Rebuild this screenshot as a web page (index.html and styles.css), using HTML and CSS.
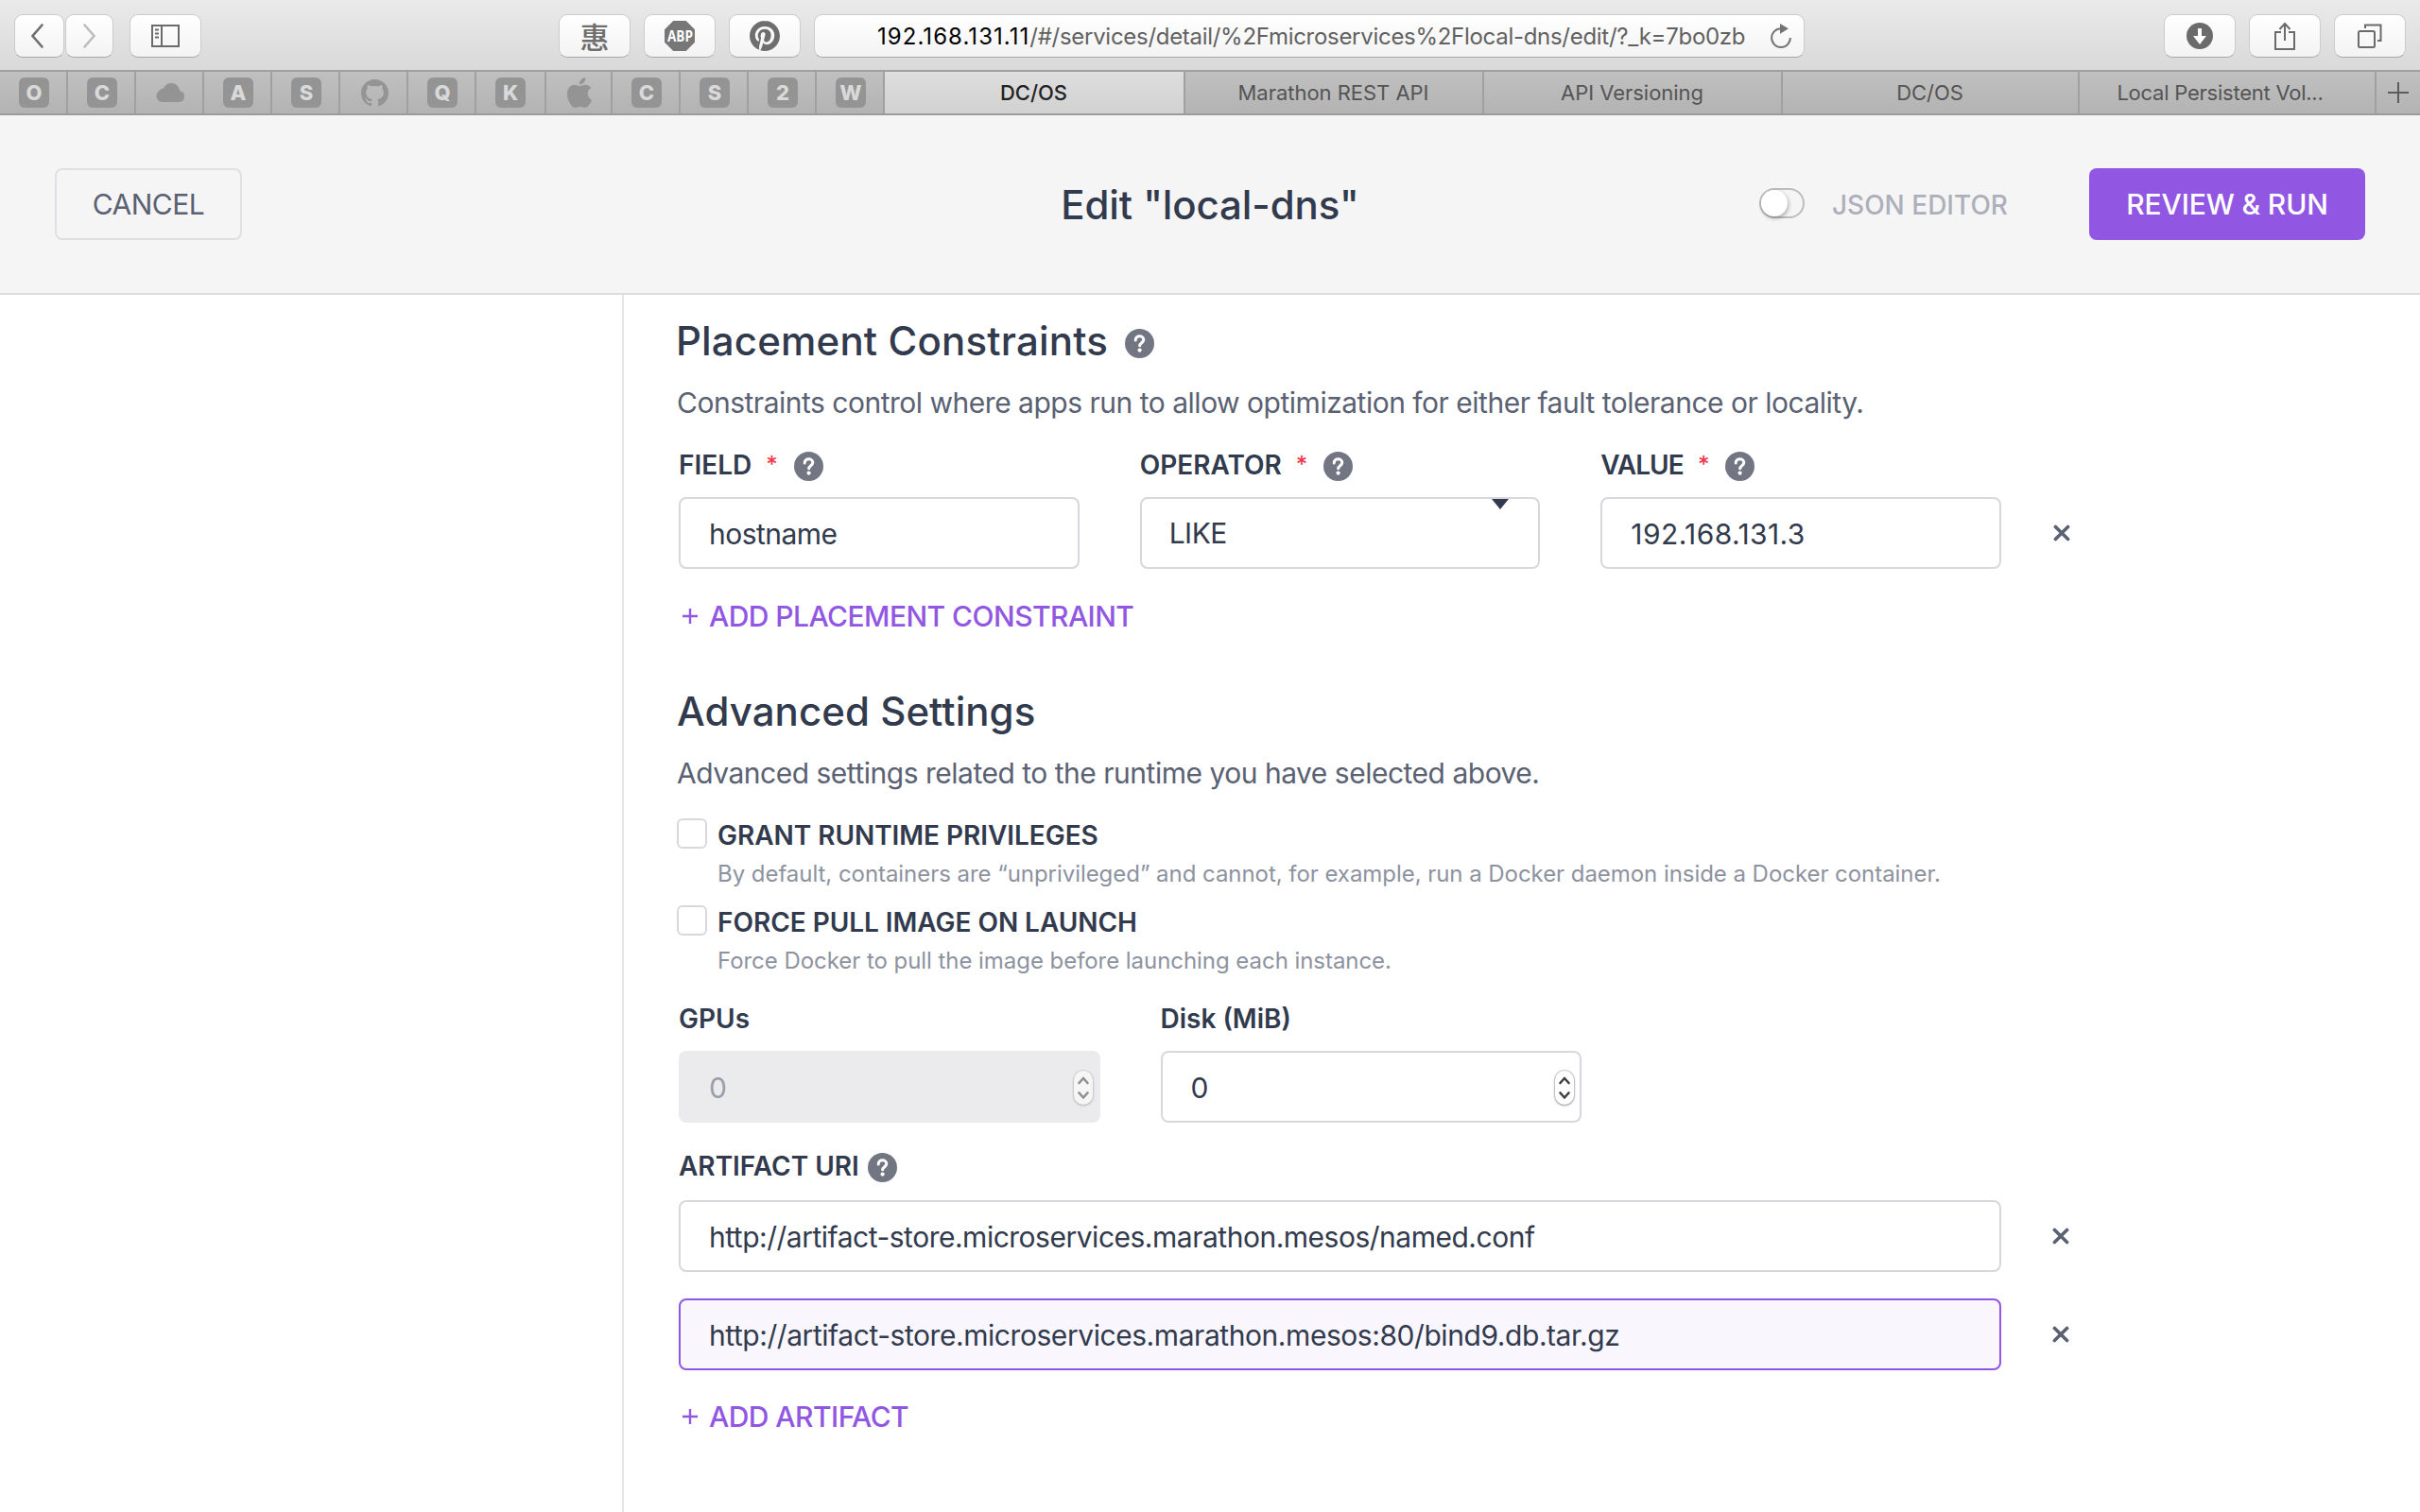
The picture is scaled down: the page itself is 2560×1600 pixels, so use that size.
FILE: index.html
```
<!DOCTYPE html>
<html lang="en">
<head>
<meta charset="utf-8">
<title>DC/OS</title>
<link rel="stylesheet" href="styles.css">
</head>
<body>
<svg class="symbols" width="0" height="0" aria-hidden="true">
  <symbol id="help" viewBox="0 0 31 31">
    <circle cx="15.5" cy="15.5" r="15.5" fill="#717682"/>
    <path d="M11.2 11.9c0-2.6 1.9-4.1 4.3-4.1s4.3 1.5 4.3 3.8c0 3-4.1 3.2-4.1 6.2" fill="none" stroke="#fff" stroke-width="3" stroke-linecap="round" stroke-linejoin="round"/>
    <circle cx="15.6" cy="22.6" r="2.1" fill="#fff"/>
  </symbol>
  <symbol id="remove" viewBox="0 0 18 18">
    <path d="M2.4 2.4l13.2 13.2M15.6 2.4L2.4 15.6" fill="none" stroke="#5a6172" stroke-width="3.6" stroke-linecap="round"/>
  </symbol>
  <symbol id="plus" viewBox="0 0 16 16">
    <path d="M8 0v16M0 8h16" stroke="#9157e2" stroke-width="2.4"/>
  </symbol>
  <symbol id="updown" viewBox="0 0 20 36">
    <path d="M5.5 13l4.5-5 4.5 5M5.5 23.5l4.5 5 4.5-5" fill="none" stroke="currentColor" stroke-width="2.6" stroke-linecap="round" stroke-linejoin="round"/>
  </symbol>
</svg>

<div class="toolbar">
  <div class="group nav">
    <span class="tool back"><svg width="18" height="28" viewBox="0 0 18 28"><path d="M14.5 2.5L4.5 14l10 11.5" fill="none" stroke="#6e6e6e" stroke-width="2.6" stroke-linecap="round"/></svg></span>
    <span class="tool forward"><svg width="18" height="28" viewBox="0 0 18 28"><path d="M3.5 2.5L13.5 14l-10 11.5" fill="none" stroke="#bdbdbd" stroke-width="2.6" stroke-linecap="round"/></svg></span>
  </div>
  <span class="tool sidebar-toggle"><svg width="30" height="24" viewBox="0 0 30 24"><path d="M1 1h28v22H1zM11 1v22" fill="none" stroke="#6b6b6b" stroke-width="2"/><path d="M4 5.5h4M4 9.5h4M4 13.5h4" stroke="#6b6b6b" stroke-width="1.8"/></svg></span>
  <div class="group extensions">
    <span class="tool seal">惠</span>
    <span class="tool"><span class="abp"><span class="abp-text">ABP</span></span></span>
    <span class="tool"><svg width="32" height="32" viewBox="0 0 24 24"><path fill="#6e6e6e" d="M12.017 0C5.396 0 .029 5.367.029 11.987c0 5.079 3.158 9.417 7.618 11.162-.105-.949-.199-2.403.041-3.439.219-.937 1.406-5.957 1.406-5.957s-.359-.72-.359-1.781c0-1.663.967-2.911 2.168-2.911 1.024 0 1.518.769 1.518 1.688 0 1.029-.653 2.567-.992 3.992-.285 1.193.6 2.165 1.775 2.165 2.128 0 3.768-2.245 3.768-5.487 0-2.861-2.063-4.869-5.008-4.869-3.41 0-5.409 2.562-5.409 5.199 0 1.033.394 2.143.889 2.741.099.12.112.225.085.345-.09.375-.293 1.199-.334 1.363-.053.225-.172.271-.401.165-1.495-.69-2.433-2.878-2.433-4.646 0-3.776 2.748-7.252 7.92-7.252 4.158 0 7.392 2.967 7.392 6.923 0 4.135-2.607 7.462-6.233 7.462-1.214 0-2.354-.629-2.758-1.379l-.749 2.848c-.269 1.045-1.004 2.352-1.498 3.146 1.123.345 2.306.535 3.55.535 6.607 0 11.985-5.365 11.985-11.987C23.97 5.39 18.592.026 11.985.026L12.017 0z"/></svg></span>
  </div>
  <div class="address">
    <span class="url"><span class="host">192.168.131.11</span><span class="path">/#/services/detail/%2Fmicroservices%2Flocal-dns/edit/?_k=7bo0zb</span></span>
    <svg width="24" height="28" viewBox="0 0 24 28"><path d="M12 6.2a9.9 9.9 0 1 0 9.900 9.900" fill="none" stroke="#737373" stroke-width="2"/><path d="M11 1l9 5.3-9 5.4z" fill="#737373"/></svg>
  </div>
  <div class="group actions">
    <span class="tool"><svg width="28" height="28" viewBox="0 0 28 28"><circle cx="14" cy="14" r="14" fill="#6b6b6b"/><path d="M12 6h4v8h5l-7 9-7-9h5z" fill="#fff"/></svg></span>
    <span class="tool"><svg width="24" height="32" viewBox="0 0 24 32"><path d="M8 12H2v18h20V12h-6M12 21V3M6.500 9L12 3l5.500 6" fill="none" stroke="#6b6b6b" stroke-width="2"/></svg></span>
    <span class="tool"><svg width="26" height="26" viewBox="0 0 26 26"><rect x="1" y="8" width="17" height="17" rx="1.5" fill="none" stroke="#6b6b6b" stroke-width="2"/><path d="M8 5V1.500h16.500V18H21" fill="none" stroke="#6b6b6b" stroke-width="2"/></svg></span>
  </div>
</div>

<div class="tabs">
  <span class="pin"><b>O</b></span>
  <span class="pin"><b>C</b></span>
  <span class="pin"><svg width="31" height="20" viewBox="0 0 31 20"><path d="M7 20a6.500 6.500 0 0 1-3.500-12Q5 5.500 8 5.500C9.500 2 12.500 0 16 0c5 0 8.500 3.500 9.300 8.200A6 6 0 0 1 25 20z" fill="#949494"/></svg></span>
  <span class="pin"><b>A</b></span>
  <span class="pin"><b>S</b></span>
  <span class="pin"><svg width="29" height="29" viewBox="0 0 16 16"><path fill="#949494" d="M8 0C3.580 0 0 3.580 0 8c0 3.540 2.290 6.530 5.470 7.590.4.070.550-.170.550-.380 0-.190-.010-.820-.010-1.490-2.010.370-2.530-.490-2.690-.940-.090-.230-.480-.940-.820-1.130-.280-.150-.680-.520-.010-.530.630-.010 1.080.580 1.230.820.720 1.210 1.870.870 2.330.660.070-.520.280-.870.510-1.070-1.780-.200-3.640-.890-3.640-3.950 0-.870.310-1.590.820-2.150-.080-.200-.360-1.020.080-2.120 0 0 .670-.210 2.200.820.640-.180 1.320-.270 2-.270.680 0 1.360.090 2 .270 1.530-1.040 2.200-.820 2.200-.820.440 1.100.160 1.920.080 2.120.510.560.820 1.270.820 2.150 0 3.070-1.870 3.750-3.650 3.950.290.250.540.730.540 1.480 0 1.070-.010 1.930-.010 2.200 0 .210.150.460.550.380A8.010 8.010 0 0 0 16 8c0-4.420-3.580-8-8-8z"/></svg></span>
  <span class="pin"><b>Q</b></span>
  <span class="pin pin-wide"><b>K</b></span>
  <span class="pin pin-narrow"><svg width="32" height="32" viewBox="0 0 24 24"><path fill="#949494" d="M12.152 6.896c-.948 0-2.415-1.078-3.960-1.040-2.040.027-3.910 1.183-4.961 3.014-2.117 3.675-.546 9.103 1.519 12.090 1.013 1.454 2.208 3.090 3.792 3.039 1.520-.065 2.090-.987 3.935-.987 1.831 0 2.350.987 3.960.948 1.637-.026 2.676-1.480 3.676-2.948 1.156-1.688 1.636-3.325 1.662-3.415-.039-.013-3.182-1.221-3.220-4.857-.026-3.040 2.480-4.494 2.597-4.559-1.429-2.090-3.623-2.324-4.390-2.376-2-.156-3.675 1.090-4.610 1.090zM15.530 3.830c.843-1.012 1.400-2.427 1.245-3.830-1.207.052-2.662.805-3.532 1.818-.780.896-1.454 2.338-1.273 3.714 1.338.104 2.715-.688 3.559-1.701"/></svg></span>
  <span class="pin"><b>C</b></span>
  <span class="pin"><b>S</b></span>
  <span class="pin"><b>2</b></span>
  <span class="pin"><b>W</b></span>
  <span class="tab tab-a active">DC/OS</span>
  <span class="tab tab-b">Marathon REST API</span>
  <span class="tab tab-b">API Versioning</span>
  <span class="tab tab-c">DC/OS</span>
  <span class="tab tab-c tight">Local Persistent Vol...</span>
  <span class="new-tab"><svg width="22" height="22" viewBox="0 0 22 22"><path d="M11 0v22M0 11h22" stroke="#5c5c5c" stroke-width="2"/></svg></span>
</div>

<header class="header">
  <div class="header-side"><button class="btn btn-cancel">CANCEL</button></div>
  <h1 class="title">Edit "local-dns"</h1>
  <div class="header-side header-end">
    <span class="switch"></span>
    <span class="switch-label">JSON EDITOR</span>
    <button class="btn btn-primary">REVIEW &amp; RUN</button>
  </div>
</header>

<div class="body">
  <aside class="side"></aside>
  <main class="main">
    <h2 class="h2">Placement Constraints <svg class="help help-lg"><use href="#help"/></svg></h2>
    <p class="lead">Constraints control where apps run to allow optimization for either fault tolerance or locality.</p>
    <div class="row constraint">
      <div class="field">
        <div class="label"><span>FIELD</span><i>*</i><svg class="help"><use href="#help"/></svg></div>
        <div class="input">hostname</div>
      </div>
      <div class="field">
        <div class="label"><span>OPERATOR</span><i>*</i><svg class="help"><use href="#help"/></svg></div>
        <div class="input select">LIKE<svg class="caret" width="18" height="11" viewBox="0 0 18 11"><path d="M0 0h18L9 11z" fill="#323a4d"/></svg></div>
      </div>
      <div class="field">
        <div class="label"><span class="value-label">VALUE</span><i>*</i><svg class="help"><use href="#help"/></svg></div>
        <div class="input ip">192.168.131.3</div>
      </div>
      <svg class="remove"><use href="#remove"/></svg>
    </div>
    <div class="add"><svg width="16" height="16"><use href="#plus"/></svg>ADD PLACEMENT CONSTRAINT</div>

    <h2 class="h2 h2-next">Advanced Settings</h2>
    <p class="lead">Advanced settings related to the runtime you have selected above.</p>
    <div class="check">
      <span class="box"></span>
      <div>
        <div class="check-label">GRANT RUNTIME PRIVILEGES</div>
        <div class="desc">By default, containers are “unprivileged” and cannot, for example, run a Docker daemon inside a Docker container.</div>
      </div>
    </div>
    <div class="check">
      <span class="box"></span>
      <div>
        <div class="check-label">FORCE PULL IMAGE ON LAUNCH</div>
        <div class="desc">Force Docker to pull the image before launching each instance.</div>
      </div>
    </div>
    <div class="row resources">
      <div class="field">
        <div class="label">GPUs</div>
        <div class="input number disabled">0<svg class="stepper"><use href="#updown"/></svg></div>
      </div>
      <div class="field">
        <div class="label">Disk (MiB)</div>
        <div class="input number">0<svg class="stepper"><use href="#updown"/></svg></div>
      </div>
    </div>
    <div class="artifacts">
      <div class="label">ARTIFACT URI<svg class="help help-near"><use href="#help"/></svg></div>
      <div class="row uri">
        <div class="input">http://artifact-store.microservices.marathon.mesos/named.conf</div>
        <svg class="remove"><use href="#remove"/></svg>
      </div>
      <div class="row uri">
        <div class="input focused">http://artifact-store.microservices.marathon.mesos:80/bind9.db.tar.gz</div>
        <svg class="remove"><use href="#remove"/></svg>
      </div>
    </div>
    <div class="add add-artifact"><svg width="16" height="16"><use href="#plus"/></svg>ADD ARTIFACT</div>
  </main>
</div>
</body>
</html>
```
FILE: styles.css
```
* { box-sizing: border-box; }
body {
  margin: 0;
  height: 1600px;
  display: flex;
  flex-direction: column;
  overflow: hidden;
  background: #fff;
  font-family: Inter, "Noto Sans", sans-serif;
  color: #323a4d;
}
svg { flex: none; display: block; }
.symbols { position: absolute; }
h1, h2, p { margin: 0; font-weight: 500; }

/* Browser toolbar */
.toolbar {
  flex: none;
  height: 76px;
  padding: 15px 15px 0 15px;
  display: flex;
  align-items: flex-start;
  background: linear-gradient(#eaeaea, #d9d9d9);
  border-bottom: 2px solid #a0a0a0;
}
.group { display: flex; gap: 14px; }
.nav { gap: 1px; }
.tool {
  width: 76px;
  height: 46px;
  display: flex;
  align-items: center;
  justify-content: center;
  background: linear-gradient(#fff, #f3f3f3);
  border: 1px solid #cbcbcb;
  border-bottom-color: #a6a6a6;
  border-radius: 9px;
}
.back { width: 53px; }
.forward { width: 51px; }
.back svg { margin-right: 6px; }
.sidebar-toggle { margin-left: 17px; }
.extensions { margin-left: 378px; }
.seal {
  font: 500 31px/44px "Noto Sans CJK SC", sans-serif;
  color: #6e6e6e;
}
.abp {
  width: 32px;
  height: 32px;
  display: flex;
  justify-content: center;
  clip-path: polygon(29% 0, 71% 0, 100% 29%, 100% 71%, 71% 100%, 29% 100%, 0 71%, 0 29%);
  background: #777;
  color: #fff;
  font: 700 16.5px/32px "Open Sans", sans-serif;
}
.abp-text { transform: scaleX(0.82); }
.address {
  width: 1048px;
  height: 46px;
  margin-left: 14px;
  padding: 0 12px 0 66px;
  display: flex;
  align-items: center;
  justify-content: space-between;
  background: linear-gradient(#fff, #f3f3f3);
  border: 1px solid #cbcbcb;
  border-bottom-color: #a6a6a6;
  border-radius: 9px;
}
.url {
  padding-top: 2px;
  font-size: 24px;
  line-height: 30px;
  letter-spacing: -0.29px;
  color: #616161;
  white-space: nowrap;
}
.host { letter-spacing: 1.05px; color: #000; }
.actions { margin-left: auto; }

/* Tab strip */
.tabs {
  flex: none;
  height: 46px;
  display: flex;
  background: linear-gradient(#c0c0c0, #b3b3b3);
  border-bottom: 2px solid #9c9c9c;
  font-size: 22px;
  color: #545454;
}
.tabs > span {
  display: flex;
  align-items: center;
  justify-content: center;
  border-right: 2px solid #a0a0a0;
}
.pin { width: 72px; padding-left: 2px; }
.pin-wide { width: 74px; padding-left: 0; }
.pin-narrow { width: 70px; }
.pin b {
  width: 32px;
  height: 32px;
  border-radius: 6px;
  background: #949494;
  color: #d9d9d9;
  font-weight: 800;
  line-height: 33px;
  text-align: center;
}
.tab { letter-spacing: -0.03px; padding-right: 1px; }
.tab-a { width: 318px; }
.tab-b { width: 316px; }
.tab-c { width: 314px; }
.active {
  background: linear-gradient(#dedede, #d1d1d1);
  color: #222;
  font-weight: 500;
}
.tight { letter-spacing: -0.24px; padding-right: 15px; }
.tabs > .new-tab { width: 46px; border-right: 0; }

/* Page header */
.header {
  flex: none;
  height: 190px;
  padding: 56px 58px 0;
  display: flex;
  justify-content: space-between;
  background: #f5f5f5;
  border-bottom: 2px solid #dcdcdc;
}
.header-side { flex: 1 1 0; display: flex; align-items: flex-start; }
.header-end { justify-content: flex-end; }
.btn {
  height: 76px;
  padding: 0;
  border-radius: 8px;
  font: 500 30px/76px Inter, sans-serif;
  text-align: center;
}
.btn-cancel {
  width: 198px;
  border: 2px solid #dfe0e5;
  background: transparent;
  color: #5a6172;
  font-weight: 400;
  line-height: 73px;
  letter-spacing: -0.5px;
}
.btn-primary {
  width: 292px;
  margin-left: 86px;
  border: 0;
  background: #9157e2;
  color: #fff;
  letter-spacing: -0.12px;
}
.title {
  font-size: 42px;
  line-height: 77px;
  letter-spacing: -0.1px;
  white-space: nowrap;
}
.switch {
  width: 48px;
  height: 32px;
  margin-top: 21px;
  border: 2px solid #bdbdbd;
  border-radius: 16px;
  background: #f5f5f5;
}
.switch::before {
  content: "";
  display: block;
  width: 28px;
  height: 28px;
  border-radius: 50%;
  background: #fff;
  box-shadow: 1px 2px 4px rgba(0, 0, 0, 0.3);
}
.switch-label {
  margin-left: 29px;
  color: #adb0bb;
  font-size: 28px;
  font-weight: 500;
  line-height: 79px;
}

/* Form */
.body { flex: 1; display: flex; min-height: 0; }
.side { flex: none; width: 660px; border-right: 2px solid #e6e6e9; }
.main { width: 1540px; padding: 25px 0 0 56px; }
.h2 {
  display: flex;
  align-items: center;
  font-size: 42px;
  line-height: 48px;
  letter-spacing: 0.16px;
  margin-left: -1px;
}
.h2-next { margin: 57px 0 0; letter-spacing: 0.05px; }
.help { width: 31px; height: 31px; margin-left: 17px; position: relative; top: 1px; }
.help-lg { margin-left: 18px; top: 2px; }
.help-near { margin-left: 9px; top: 1px; }
.lead {
  margin-top: 21px;
  font-size: 30px;
  font-weight: 400;
  line-height: 40px;
  letter-spacing: -0.49px;
  color: #5a6172;
  white-space: nowrap;
}
.row { display: flex; align-items: flex-end; margin-left: 2px; }
.constraint { margin-top: 30px; gap: 64px; width: 1463px; }
.constraint .field { flex: 1; }
.label {
  display: flex;
  align-items: center;
  height: 32px;
  margin-bottom: 18px;
  font-size: 28px;
  font-weight: 600;
  line-height: 32px;
}
.label i {
  margin-left: 15px;
  color: #f0374c;
  font-style: normal;
  font-size: 24px;
  font-weight: 500;
}
.value-label { letter-spacing: -0.9px; }
.input {
  display: flex;
  align-items: center;
  height: 76px;
  padding: 2px 29px 0 30px;
  border: 2px solid #d7d8dd;
  border-radius: 8px;
  background: #fff;
  font-size: 30px;
  letter-spacing: -0.53px;
}
.ip { letter-spacing: 0.4px; }
.select { position: relative; padding: 0 29px; }
.caret { position: absolute; right: 31px; top: 0; }
.remove { width: 18px; height: 18px; }
.constraint .remove { margin: 0 -9px 29px -9px; }
.add {
  display: flex;
  align-items: center;
  gap: 12px;
  margin: 30px 0 0 6px;
  font-size: 30px;
  font-weight: 500;
  line-height: 40px;
  letter-spacing: -0.55px;
  color: #9157e2;
}
.add-artifact { margin-top: 29px; }
.check { display: flex; margin-top: 28px; }
.check + .check { margin-top: 17px; }
.box {
  flex: none;
  width: 32px;
  height: 32px;
  margin-right: 11px;
  border: 2px solid #d7d8dd;
  border-radius: 6px;
}
.check-label {
  padding-top: 2px;
  font-size: 28px;
  font-weight: 600;
  line-height: 32px;
  letter-spacing: -0.04px;
}
.desc {
  margin-top: 9px;
  font-size: 24px;
  line-height: 32px;
  letter-spacing: -0.05px;
  color: #8d929f;
  white-space: nowrap;
}
.resources { margin-top: 29px; gap: 64px; }
.resources .field { width: 445.5px; }
.number { justify-content: space-between; padding-right: 6px; }
.stepper {
  width: 20px;
  height: 36px;
  border-radius: 10px;
  background: #fff;
  color: #404040;
  box-shadow: 0 0 1px 1px rgba(0, 0, 0, 0.16), 0 1px 3px rgba(0, 0, 0, 0.3);
}
.disabled { border-color: #ebebed; background: #ebebed; color: #9a9eaa; }
.disabled .stepper {
  background: #f6f6f6;
  color: #8f8f8f;
  box-shadow: 0 0 1px 1px rgba(0, 0, 0, 0.08), 0 1px 3px rgba(0, 0, 0, 0.18);
}
.artifacts { margin-top: 30px; }
.artifacts .label { margin: 0 0 20px 2px; }
.uri { align-items: center; gap: 54px; }
.uri + .uri { margin-top: 28px; }
.uri .input { width: 1399px; letter-spacing: -0.49px; }
.uri .focused { border-color: #9157e2; background: #f9f6fe; letter-spacing: -0.44px; }
```
